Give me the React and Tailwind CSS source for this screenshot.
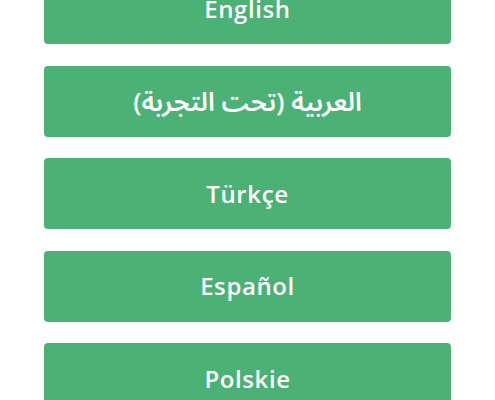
export default function App() {
  const items = [
    { label: "English" },
    { label: "العربية (تحت التجربة)", rtl: true },
    { label: "Türkçe" },
    { label: "Español" },
    { label: "Polskie" },
  ];
  return (
    <div className="h-[400px] w-[495px] overflow-hidden bg-white">
      <div className="mt-[-27px] flex flex-col gap-[21.5px] px-[44px]">
        {items.map((it) => (
          <div
            key={it.label}
            dir={it.rtl ? "rtl" : "ltr"}
            className={
              it.rtl
                ? "flex h-[71px] items-center justify-center rounded-[4px] bg-[#4bb174] text-[26px] font-semibold text-white"
                : "flex h-[71px] items-center justify-center rounded-[4px] bg-[#4bb174] text-[24px] font-semibold tracking-[0.6px] text-white"
            }
            style={{ fontFamily: '"Open Sans", "Noto Sans Arabic", "DejaVu Sans", sans-serif' }}
          >
            {it.label}
          </div>
        ))}
      </div>
    </div>
  );
}
